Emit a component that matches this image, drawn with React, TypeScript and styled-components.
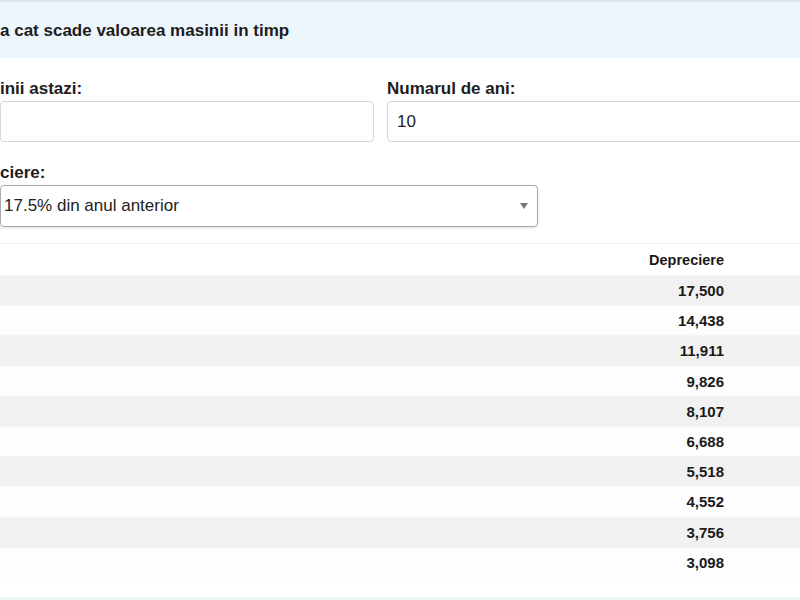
import { FC } from 'react';

import styled, { createGlobalStyle } from 'styled-components';

const rows = [17500, 14438, 11911, 9826, 8107, 6688, 5518, 4552, 3756, 3098];

const App: FC = () => {
  return (
    <Page>
      <GlobalStyle />
      <Header>
        <Title>a cat scade valoarea masinii in timp</Title>
      </Header>
      <Form>
        <Field>
          <Label>inii astazi:</Label>
          <Input defaultValue='' />
        </Field>
        <Field>
          <Label>Numarul de ani:</Label>
          <Input defaultValue='10' />
        </Field>
        <Field>
          <Label>ciere:</Label>
          <Select>
            <span>17.5% din anul anterior</span>
            <Arrow />
          </Select>
        </Field>
      </Form>
      <Table>
        <thead>
          <tr>
            <Th />
            <Th $right>Depreciere</Th>
            <Th />
          </tr>
        </thead>
        <tbody>
          {rows.map((value, i) => (
            <Row key={value} $striped={i % 2 === 0}>
              <Td />
              <Td $right>{value.toLocaleString('en-US')}</Td>
              <Td />
            </Row>
          ))}
        </tbody>
      </Table>
      <Footer />
    </Page>
  );
};

const GlobalStyle = createGlobalStyle`
  html, body {
    margin: 0;
    padding: 0;
    overflow: hidden;
    background: #ffffff;
  }
  body {
    font-family: "Liberation Sans", Arial, sans-serif;
    color: #222;
  }
`;

const Page = styled.div`
  width: 900px;
  height: 600px;
`;

const Header = styled.div`
  height: 56px;
  border-top: 2px solid #dfe7ef;
  background: #eef6fd;
  display: flex;
  align-items: center;
`;

const Title = styled.h2`
  margin: 0;
  padding-top: 2px;
  font-size: 17px;
  font-weight: bold;
  color: #1d1d1d;
`;

const Form = styled.div`
  display: grid;
  grid-template-columns: 374px 1fr;
  column-gap: 13px;
  row-gap: 22px;
  padding-top: 22px;
`;

const Field = styled.div`
  display: flex;
  flex-direction: column;
  gap: 3px;

  &:nth-child(3) {
    grid-column: 1 / -1;
    width: 538px;
  }
`;

const Label = styled.label`
  font-size: 17px;
  font-weight: bold;
  line-height: 18px;
  color: #1d1d1d;
`;

const Input = styled.input`
  box-sizing: border-box;
  height: 41px;
  width: 100%;
  margin: 0;
  padding: 0 9px;
  border: 1px solid #d6d6d6;
  border-radius: 4px;
  font-family: inherit;
  font-size: 17px;
  color: #222;
  outline: none;
`;

const Select = styled.div`
  box-sizing: border-box;
  height: 42px;
  display: flex;
  align-items: center;
  justify-content: space-between;
  padding: 0 9px 0 3px;
  border: 1px solid #a9a9a9;
  border-radius: 4px;
  box-shadow: 0 1px 3px rgba(0, 0, 0, 0.12);
  font-size: 17px;
  color: #222;
`;

const Arrow = styled.span`
  width: 0;
  height: 0;
  border-left: 4px solid transparent;
  border-right: 4px solid transparent;
  border-top: 6px solid #777;
`;

const Table = styled.table`
  width: 900px;
  margin-top: 16px;
  border-collapse: collapse;
  border-top: 1px solid #eeeeee;
  font-weight: bold;
  color: #1a1a1a;
`;

const Th = styled.th<{ $right?: boolean }>`
  height: 32px;
  padding: 0 16px 0 0;
  box-sizing: border-box;
  font-size: 14.5px;
  text-align: ${(p) => (p.$right ? 'right' : 'left')};
  width: ${(p) => (p.$right ? '120px' : 'auto')};
  &:last-child {
    width: 160px;
  }
`;

const Row = styled.tr<{ $striped: boolean }>`
  background: ${(p) => (p.$striped ? '#f1f1f1' : '#fdfdfd')};
  border-top: 1px solid #f5f5f5;
`;

const Td = styled.td<{ $right?: boolean }>`
  height: 30.2px;
  padding: 0 16px 0 0;
  box-sizing: border-box;
  font-size: 15px;
  text-align: ${(p) => (p.$right ? 'right' : 'left')};
`;

const Footer = styled.div`
  margin-top: 20px;
  border-top: 1px solid #f3f3f3;
  height: 4px;
  background: #eef9f4;
`;

export default App;
